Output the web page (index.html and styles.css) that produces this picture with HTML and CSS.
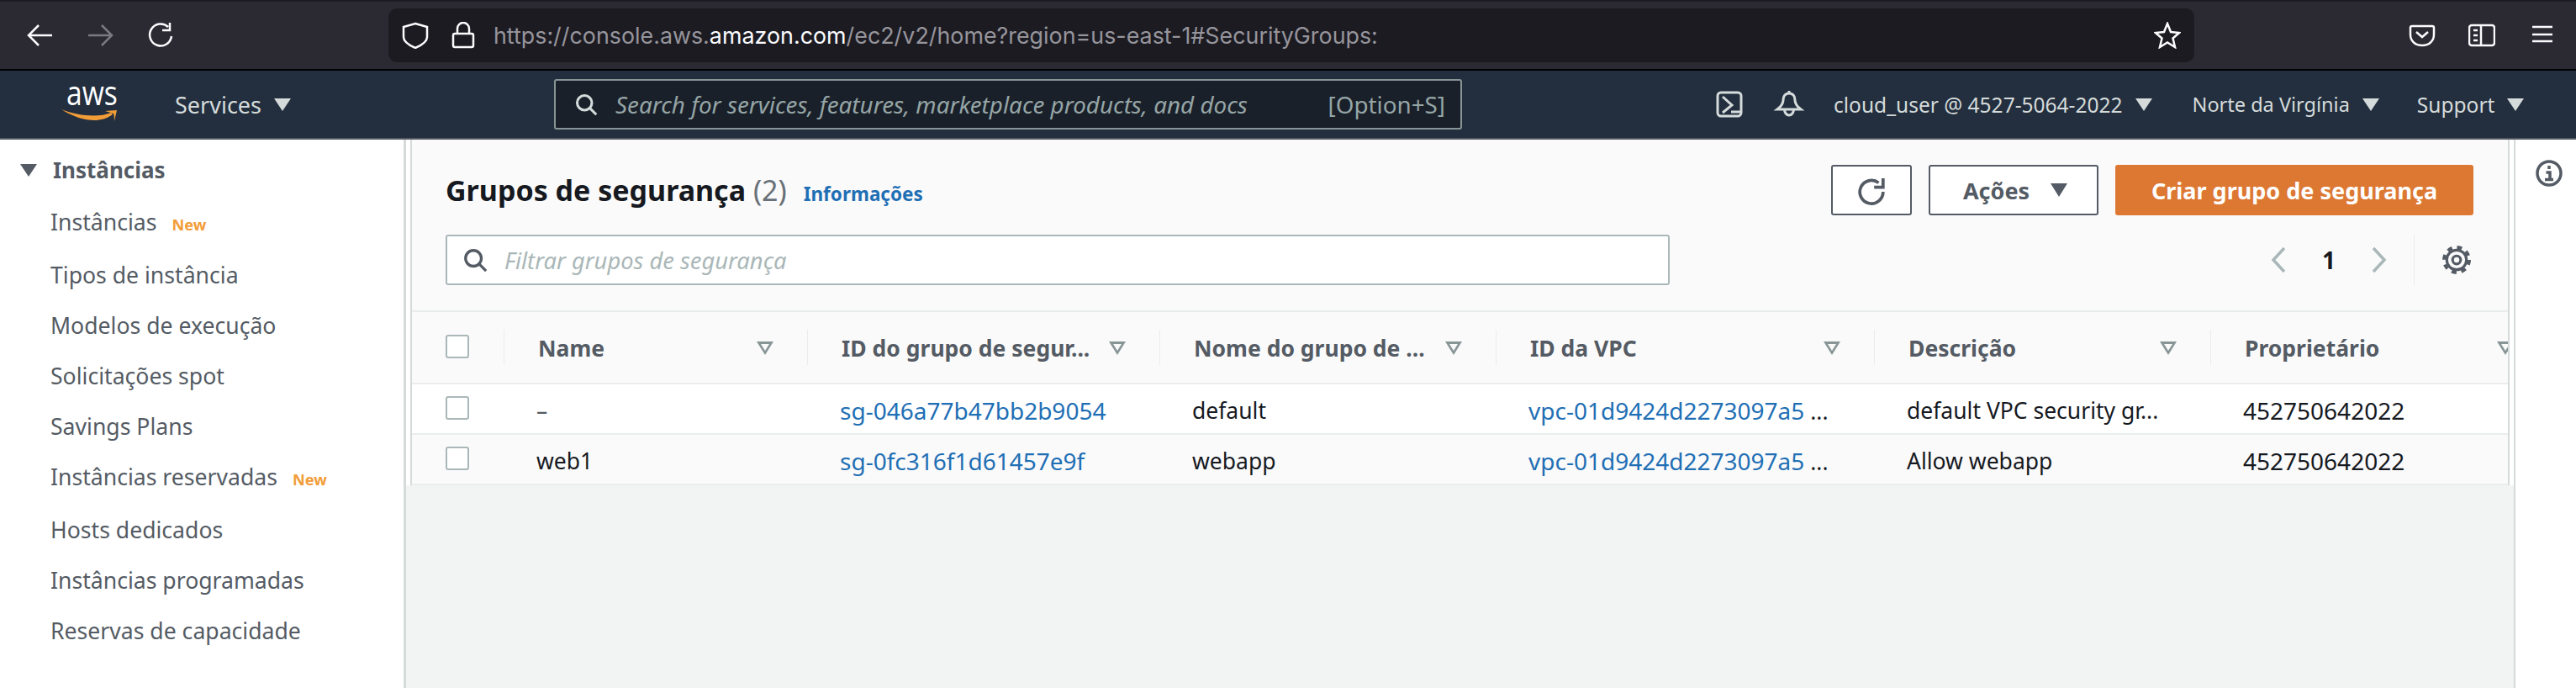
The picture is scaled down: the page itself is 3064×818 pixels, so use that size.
FILE: index.html
```html
<!DOCTYPE html>
<html lang="en">
<head>
    <meta charset="UTF-8">
    <title>Security Groups</title>
    <link rel="stylesheet" href="styles.css">
</head>
<body>
    <div class="browser">
        <svg class="bicon" viewBox="0 0 32 32"><path d="M31 16H4M15 4L3 16l12 12"/></svg>
        <svg class="bicon fwd" viewBox="0 0 32 32"><path d="M2 16h27M18 4l12 12-12 12"/></svg>
        <svg class="bicon reload" viewBox="0 0 32 32"><path d="M25 6A13 13 0 1 0 29 17M27 1v9h-9"/></svg>
        <div class="urlbar">
            <svg class="uicon" viewBox="0 0 32 32"><path d="M16 2l14 4v12c0 6-7 10-14 13C9 28 2 24 2 18V6z"/></svg>
            <svg class="uicon lock" viewBox="0 0 32 32"><path d="M9 14V8a7 7 0 0 1 14 0v6M6 14h20a2 2 0 0 1 2 2v12a2 2 0 0 1-2 2H6a2 2 0 0 1-2-2V16a2 2 0 0 1 2-2z"/></svg>
            <span class="url">https://console.aws.<b>amazon.com</b>/ec2/v2/home?region=us-east-1#SecurityGroups:</span>
            <svg class="uicon" viewBox="0 0 32 32"><path d="M16 2l4 10 10 1-7.5 6.5L25 30l-9-5.5L7 30l2.5-10.5L2 13l10-1z"/></svg>
        </div>
        <svg class="bicon pocket" viewBox="0 0 32 32"><path d="M4 5h24a2 2 0 0 1 2 2v8c0 8-6 13-14 13S2 23 2 15V7a2 2 0 0 1 2-2zM9 12l7 6 7-6"/></svg>
        <svg class="bicon side" viewBox="0 0 32 32"><path d="M4 4h24a3 3 0 0 1 3 3v18a3 3 0 0 1-3 3H4a3 3 0 0 1-3-3V7a3 3 0 0 1 3-3zM15 4v24M6 10h5M6 16h5M6 22h5"/></svg>
        <svg class="bicon menu" viewBox="0 0 32 32"><path d="M4 6h24M4 15h24M4 23h24"/></svg>
    </div>

    <nav class="awsnav">
        <div class="logo">
            <span class="logo-text">aws</span>
            <svg class="smile" viewBox="0 0 67 16"><path d="M0 1C14 10 28 14 39 14c8 0 15-2 22-7l-2-2C44 11 20 9 0 1zM52 3l14-1-3 13c0 0 0-7-1-9z"/></svg>
        </div>
        <span class="nav-link services">Services<i class="caret"></i></span>
        <div class="search">
            <svg class="search-icon" viewBox="0 0 32 32"><circle cx="14" cy="14" r="10"/><path d="M21 21l9 9"/></svg>
            <span class="search-text">Search for services, features, marketplace products, and docs</span>
            <span class="search-key">[Option+S]</span>
        </div>
        <svg class="nav-icon term" viewBox="0 0 32 32"><rect x="2" y="2" width="28" height="28" rx="4"/><path d="M8 7l11 10L8 26M18 25h11"/></svg>
        <svg class="nav-icon bell" viewBox="0 0 32 32"><path d="M16 0v3M16 3c-5 0-7 4-7 8 0 4-3 8-7 11h28c-4-3-7-7-7-11 0-4-2-8-7-8zM10.5 22a5.5 7 0 0 0 11 0"/></svg>
        <span class="nav-link user">cloud_user @ 4527-5064-2022<i class="caret"></i></span>
        <span class="nav-link region">Norte da Virgínia<i class="caret"></i></span>
        <span class="nav-link support">Support<i class="caret"></i></span>
    </nav>

    <div class="main">
        <aside class="sidebar">
            <div class="side-head"><i class="side-caret"></i>Instâncias</div>
            <ul class="side-list">
                <li class="has-new">Instâncias<span class="new">New</span></li>
                <li>Tipos de instância</li>
                <li>Modelos de execução</li>
                <li>Solicitações spot</li>
                <li>Savings Plans</li>
                <li class="has-new">Instâncias reservadas<span class="new">New</span></li>
                <li>Hosts dedicados</li>
                <li>Instâncias programadas</li>
                <li>Reservas de capacidade</li>
            </ul>
        </aside>

        <section class="content">
            <div class="panel">
                <div class="panel-top">
                    <div class="title-row">
                        <h1>Grupos de segurança <span class="count">(2)</span></h1>
                        <a class="info">Informações</a>
                        <div class="actions">
                            <button class="btn btn-icon"><svg viewBox="0 0 32 32"><path d="M24 6A13 13 0 1 0 29 16M29 1v10H19"/></svg></button>
                            <button class="btn btn-actions">Ações<i class="btn-caret"></i></button>
                            <button class="btn btn-primary">Criar grupo de segurança</button>
                        </div>
                    </div>
                    <div class="filter-row">
                        <div class="filter">
                            <svg viewBox="0 0 32 32"><circle cx="14" cy="14" r="10"/><path d="M21 21l9 9"/></svg>
                            <span>Filtrar grupos de segurança</span>
                        </div>
                        <div class="pager">
                            <svg class="chev" viewBox="0 0 20 32"><path d="M17 2L4 16l13 14"/></svg>
                            <span class="page">1</span>
                            <svg class="chev" viewBox="0 0 20 32"><path d="M3 2l13 14L3 30"/></svg>
                            <span class="pager-sep"></span>
                            <svg class="gear" viewBox="0 0 32 32"><circle class="teeth" cx="16" cy="16" r="14"/><circle cx="16" cy="16" r="11"/><circle cx="16" cy="16" r="4.5"/></svg>
                        </div>
                    </div>
                </div>

                <div class="row head">
                    <div class="check-cell"><span class="check"></span></div>
                    <div class="cell"><span>Name</span><i class="sort"></i></div>
                    <div class="cell"><span>ID do grupo de segur...</span><i class="sort"></i></div>
                    <div class="cell"><span>Nome do grupo de ...</span><i class="sort"></i></div>
                    <div class="cell"><span>ID da VPC</span><i class="sort"></i></div>
                    <div class="cell"><span>Descrição</span><i class="sort"></i></div>
                    <div class="cell"><span>Proprietário</span><i class="sort"></i></div>
                </div>
                <div class="row body odd">
                    <div class="check-cell"><span class="check"></span></div>
                    <div class="cell muted">–</div>
                    <div class="cell"><a>sg-046a77b47bb2b9054</a></div>
                    <div class="cell">default</div>
                    <div class="cell"><a>vpc-01d9424d2273097a5</a> ...</div>
                    <div class="cell">default VPC security gr...</div>
                    <div class="cell num">452750642022</div>
                </div>
                <div class="row body">
                    <div class="check-cell"><span class="check"></span></div>
                    <div class="cell">web1</div>
                    <div class="cell"><a>sg-0fc316f1d61457e9f</a></div>
                    <div class="cell">webapp</div>
                    <div class="cell"><a>vpc-01d9424d2273097a5</a> ...</div>
                    <div class="cell">Allow webapp</div>
                    <div class="cell num">452750642022</div>
                </div>
            </div>
        </section>

        <aside class="rail">
            <svg viewBox="0 0 32 32"><circle cx="16" cy="16" r="14"/><path d="M12.5 15H17v7M11 23.5h10M16 7v4"/></svg>
        </aside>
    </div>
</body>
</html>
```

FILE: styles.css
```css
* {
    box-sizing: border-box;
}
html, body {
    margin: 0;
    height: 100%;
}
body {
    width: 3064px;
    height: 818px;
    overflow: hidden;
    display: flex;
    flex-direction: column;
    font-family: "Noto Sans", "Open Sans", sans-serif;
    background: #fff;
}

/* browser toolbar */
.browser {
    height: 84px;
    flex: none;
    background: #2b2a33;
    border-top: 2px solid #1c1b22;
    border-bottom: 2px solid #000;
    display: flex;
    align-items: center;
    padding-left: 31px;
}
.bicon {
    width: 32px;
    height: 32px;
    fill: none;
    stroke: #fbfbfe;
    stroke-width: 2.5;
    flex: none;
}
.fwd {
    margin-left: 40px;
    stroke: #7b7a80;
}
.reload {
    margin-left: 40px;
}
.urlbar {
    width: 2148px;
    height: 64px;
    margin-left: 255px;
    background: #1c1b22;
    border-radius: 10px;
    display: flex;
    align-items: center;
    padding: 0 16px;
}
.uicon {
    width: 32px;
    height: 32px;
    fill: none;
    stroke: #fbfbfe;
    stroke-width: 2.5;
    flex: none;
}
.lock {
    margin-left: 25px;
}
.url {
    margin-left: 20px;
    font-family: Inter, sans-serif;
    font-size: 26.85px;
    color: #96959c;
    white-space: nowrap;
    flex: 1;
}
.url b {
    font-weight: 400;
    color: #fbfbfe;
}
.pocket {
    margin-left: 255px;
}
.side {
    margin-left: 39px;
}
.menu {
    margin-left: 40px;
}

/* aws header */
.awsnav {
    height: 82px;
    flex: none;
    background: #232f3e;
    border-bottom: 2px solid #545b64;
    display: flex;
    align-items: center;
    color: #d5dbdb;
    font-size: 24.5px;
}
.logo {
    width: 67px;
    height: 62px;
    margin-left: 73px;
    position: relative;
    flex: none;
}
.logo-text {
    display: block;
    text-align: center;
    color: #fff;
    font-family: "Open Sans", sans-serif;
    font-size: 41px;
    line-height: 32px;
    transform: scaleX(.82);
}
.smile {
    position: absolute;
    left: 0;
    top: 36px;
    width: 67px;
    height: 16px;
    fill: #f29d38;
}
.nav-link {
    white-space: nowrap;
    display: flex;
    align-items: center;
}
.services {
    margin-left: 68px;
    font-size: 27px;
}
.caret {
    width: 0;
    height: 0;
    margin-left: 15px;
    border-left: 10px solid transparent;
    border-right: 10px solid transparent;
    border-top: 15px solid #d5dbdb;
}
.search {
    width: 1080px;
    height: 60px;
    margin-left: 313px;
    background: #1a2029;
    border: 2px solid #879596;
    border-radius: 3px;
    display: flex;
    align-items: center;
    padding: 0 18px 0 22px;
    color: #95a5a6;
    font-size: 27.8px;
    flex: none;
}
.search-icon {
    width: 28px;
    height: 28px;
    fill: none;
    stroke: #d5dbdb;
    stroke-width: 3.5;
    flex: none;
}
.search-text {
    margin-left: 21px;
    font-style: italic;
    flex: 1;
    white-space: nowrap;
}
.search-key {
    white-space: nowrap;
}
.nav-icon {
    width: 32px;
    height: 32px;
    fill: none;
    stroke: #d5dbdb;
    stroke-width: 3;
    flex: none;
    overflow: visible;
}
.term {
    margin-left: 302px;
}
.bell {
    margin-left: 39px;
}
.user {
    margin-left: 37px;
}
.region {
    margin-left: 48px;
    font-size: 23.5px;
}
.support {
    margin-left: 45px;
}

/* main area */
.main {
    flex: 1;
    display: flex;
    min-height: 0;
}
.sidebar {
    width: 483px;
    flex: none;
    background: #fff;
    border-right: 3px solid #d5dbdb;
    color: #545b64;
    font-size: 26.6px;
}
.side-head {
    display: flex;
    align-items: center;
    height: 40px;
    margin-top: 16px;
    padding-left: 24px;
    font-size: 26px;
    font-weight: 700;
}
.side-caret {
    width: 0;
    height: 0;
    margin-right: 19px;
    border-left: 10px solid transparent;
    border-right: 10px solid transparent;
    border-top: 15px solid #545b64;
}
.side-list {
    list-style: none;
    margin: 12px 0 0;
    padding: 0 0 0 60px;
}
.side-list li {
    height: 60px;
    display: flex;
    align-items: center;
}
.side-list .has-new {
    margin-bottom: 3px;
}
.new {
    margin: 5px 0 0 18px;
    font-size: 18.2px;
    font-weight: 700;
    color: #f29d38;
}

.content {
    width: 2507px;
    flex: none;
    background: #f2f3f3;
    padding: 0 5px;
}
.panel {
    background: #fafafa;
    border-left: 2px solid #d5dbdb;
    border-right: 2px solid #d5dbdb;
    box-shadow: -5px 0 0 #fff, 5px 0 0 #fff;
    overflow: hidden;
    height: 411px;
}
.panel-top {
    height: 205px;
    padding: 30px 41px 0 40px;
    border-bottom: 2px solid #eaeded;
}
.title-row {
    display: flex;
    align-items: center;
    height: 60px;
}
h1 {
    margin: 0;
    font-size: 34px;
    font-weight: 700;
    color: #16191f;
    white-space: nowrap;
}
.count {
    font-weight: 400;
    color: #687078;
}
.info {
    margin-left: 20px;
    margin-top: 8px;
    font-size: 22.5px;
    font-weight: 700;
    color: #1f6fb5;
}
.actions {
    margin-left: auto;
    display: flex;
    gap: 20px;
}
.btn {
    height: 60px;
    border: 2px solid #545b64;
    border-radius: 3px;
    background: #fff;
    font-family: inherit;
    font-size: 27px;
    font-weight: 700;
    color: #545b64;
}
.btn-icon {
    width: 96px;
    padding: 0;
}
.btn-icon svg {
    width: 34px;
    height: 34px;
    fill: none;
    stroke: #545b64;
    stroke-width: 3.5;
    vertical-align: middle;
}
.btn-actions {
    width: 202px;
    padding: 0 0 0 4px;
    display: flex;
    align-items: center;
    justify-content: center;
}
.btn-caret {
    width: 0;
    height: 0;
    margin-left: 25px;
    border-left: 10px solid transparent;
    border-right: 10px solid transparent;
    border-top: 16px solid #545b64;
}
.btn-primary {
    width: 426px;
    background: #dd7833;
    border-color: #dd7833;
    color: #fff;
}
.filter-row {
    display: flex;
    align-items: center;
    margin-top: 23px;
}
.filter {
    width: 1456px;
    height: 60px;
    background: #fff;
    border: 2px solid #aab7b8;
    border-radius: 3px;
    display: flex;
    align-items: center;
    padding-left: 18px;
    font-size: 27.3px;
    font-style: italic;
    color: #aab7b8;
}
.filter svg {
    width: 30px;
    height: 30px;
    margin-right: 20px;
    fill: none;
    stroke: #545b64;
    stroke-width: 3.5;
}
.pager {
    margin-left: auto;
    margin-right: 3px;
    display: flex;
    align-items: center;
    height: 60px;
}
.chev {
    width: 20px;
    height: 32px;
    fill: none;
    stroke: #aab7b8;
    stroke-width: 3.5;
}
.page {
    width: 100px;
    text-align: center;
    font-size: 28px;
    font-weight: 700;
    color: #16191f;
}
.pager-sep {
    width: 1px;
    height: 60px;
    margin: 0 33px 0 31px;
    background: #eaeded;
}
.gear {
    width: 34px;
    height: 34px;
    fill: none;
    stroke: #545b64;
    stroke-width: 3;
}
.gear .teeth {
    stroke-width: 4;
    stroke-dasharray: 5.5 5.5;
}

/* table */
.row {
    display: grid;
    grid-template-columns: 109px 361px 419px 400px 450px 400px 401px;
    font-size: 26.5px;
    color: #16191f;
    white-space: nowrap;
}
.row.head {
    height: 86px;
    align-items: center;
    border-bottom: 2px solid #eaeded;
    background: #fafafa;
    color: #545b64;
    font-weight: 700;
}
.row.body {
    height: 60px;
    align-items: center;
    background: #fafafa;
    border-bottom: 2px solid #eaeded;
}
.row.odd {
    background: #fff;
}
.check-cell {
    padding-left: 40px;
}
.check {
    display: block;
    width: 28px;
    height: 28px;
    margin-bottom: 2px;
    background: #fff;
    border: 2px solid #aab7b8;
    border-radius: 3px;
}
.cell {
    padding: 3px 0 0 39px;
    overflow: hidden;
}
.head .cell {
    height: 42px;
    display: flex;
    align-items: center;
    justify-content: space-between;
    padding: 2px 40px 0 40px;
    border-left: 1px solid #eaeded;
}
.sort {
    position: relative;
    width: 0;
    height: 0;
    flex: none;
    border-left: 10px solid transparent;
    border-right: 10px solid transparent;
    border-top: 16px solid #879596;
}
.sort::after {
    content: "";
    position: absolute;
    left: -5px;
    top: -13px;
    border-left: 5px solid transparent;
    border-right: 5px solid transparent;
    border-top: 8px solid #fafafa;
}
.muted {
    color: #545b64;
}
.cell a {
    font-size: 28px;
    color: #1f6fb5;
}
.cell.num {
    font-size: 28px;
}

.rail {
    flex: 1;
    background: #fff;
    border-left: 2px solid #d5dbdb;
    display: flex;
    justify-content: center;
    padding: 24px 0 0 8px;
}
.rail svg {
    width: 32px;
    height: 32px;
    fill: none;
    stroke: #545b64;
    stroke-width: 3.5;
}
```
